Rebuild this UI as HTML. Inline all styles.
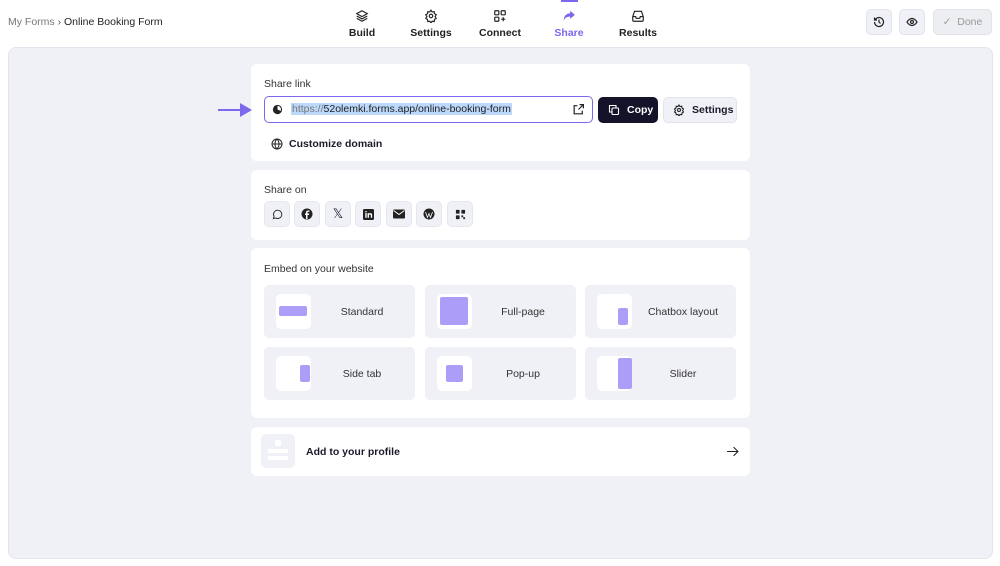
<!DOCTYPE html>
<html><head><meta charset="utf-8"><style>
*{box-sizing:border-box;margin:0;padding:0}
body{width:1000px;height:566px;background:#fff;font-family:"Liberation Sans",sans-serif;color:#1a1a2a;position:relative;overflow:hidden;font-size:10.5px}
.abs{position:absolute}
.nav{position:absolute;top:9px;width:60px;text-align:center;font-size:10.5px;font-weight:bold;color:#222}
.nav svg{display:block;margin:0 auto 4px}
.panel{position:absolute;left:8px;top:47px;width:985px;height:512px;background:#f0f1f6;border:1px solid #e4e5ec;border-radius:8px}
.card{position:absolute;left:251px;width:499px;background:#fff;border-radius:6px}
.lbl{position:absolute;left:13px;font-size:10.5px;color:#333}
.sq{position:absolute;top:31px;width:26px;height:26px;background:#f0f1f6;border:1px solid #e6e7ee;border-radius:5px;display:flex;align-items:center;justify-content:center}
.tile{position:absolute;width:151px;height:53px;background:#f0f1f6;border-radius:5px}
.tile .ic{position:absolute;left:12px;top:9px;width:35px;height:35px;background:#fff;border-radius:5px}
.tile .ic i{position:absolute;background:#ac9ef8;border-radius:2px}
.tile span{position:absolute;left:45px;right:0;top:21px;text-align:center;font-size:10.5px;color:#333}
.rb{position:absolute;top:9px;width:26px;height:26px;background:#f0f1f6;border:1px solid #e3e4ea;border-radius:5px;display:flex;align-items:center;justify-content:center}
.btn{position:absolute;top:33px;height:26px;border-radius:5px;font-weight:bold;font-size:10.5px;display:flex;align-items:center;gap:7px;padding-left:10px}
</style></head><body>
<div class="abs" style="left:8px;top:16px;font-size:10.5px;color:#777">My Forms <span style="color:#555">›</span> <span style="color:#222">Online Booking Form</span></div>

<div class="nav" style="left:332px"><svg width="14" height="14" viewBox="0 0 24 24" fill="none" stroke="#222" stroke-width="2"><path d="M12 3 3 8l9 5 9-5z"/><path d="M3 12l9 5 9-5M3 16l9 5 9-5"/></svg>Build</div>
<div class="nav" style="left:401px"><svg width="14" height="14" viewBox="0 0 24 24" fill="none" stroke="#222" stroke-width="2"><circle cx="12" cy="12" r="3"/><path d="M12 2l2 3 3.5-.5.5 3.5 3 2-2 3 2 3-3 2-.5 3.5-3.5-.5-2 3-2-3-3.5.5-.5-3.5-3-2 2-3-2-3 3-2 .5-3.5 3.5.5z"/></svg>Settings</div>
<div class="nav" style="left:470px"><svg width="14" height="14" viewBox="0 0 24 24" fill="none" stroke="#222" stroke-width="2"><rect x="3" y="3" width="7" height="7" rx="1"/><rect x="14" y="3" width="7" height="7" rx="1"/><rect x="3" y="14" width="7" height="7" rx="1"/><path d="M17.5 14v7M14 17.5h7"/></svg>Connect</div>
<div class="abs" style="left:561px;top:0;width:17px;height:2px;background:#7b68ee"></div>
<div class="nav" style="left:539px;color:#7b68ee"><svg width="14" height="14" viewBox="0 0 24 24" fill="#7b68ee"><path d="M14 3l8 7-8 7v-4c-6 0-9 2-11 7 0-7 3-12 11-13z"/></svg>Share</div>
<div class="nav" style="left:608px"><svg width="14" height="14" viewBox="0 0 24 24" fill="none" stroke="#222" stroke-width="2"><path d="M3 13l3-9h12l3 9v6a2 2 0 0 1-2 2H5a2 2 0 0 1-2-2z"/><path d="M3 13h5l1 3h6l1-3h5"/></svg>Results</div>

<div class="rb" style="left:866px"><svg width="12" height="12" viewBox="0 0 24 24" fill="none" stroke="#222" stroke-width="2.4"><path d="M3 12a9 9 0 1 0 3-6.7L3 8M3 3v5h5M12 7v5l3 3"/></svg></div>
<div class="rb" style="left:899px"><svg width="12" height="12" viewBox="0 0 24 24" fill="none" stroke="#222" stroke-width="2.4"><path d="M2 12s4-7 10-7 10 7 10 7-4 7-10 7S2 12 2 12z"/><circle cx="12" cy="12" r="3"/></svg></div>
<div class="rb" style="left:933px;width:59px;color:#999;font-size:10.5px;background:#eceef2">✓&nbsp; Done</div>

<div class="panel"></div>

<div class="card" style="top:64px;height:97px">
 <div class="lbl" style="top:14px">Share link</div>
 <div class="abs" style="left:13px;top:32px;width:329px;height:27px;border:1.5px solid #7b68ee;border-radius:5px">
  <svg class="abs" style="left:7px;top:7px" width="11" height="11" viewBox="0 0 24 24"><circle cx="12" cy="12" r="10" fill="#222"/><path d="M12 12V4a8 8 0 0 1 7 11z" fill="#fff"/></svg>
  <span class="abs" style="left:26px;top:6px;background:#bcd8fb;font-size:10.5px;color:#222;padding:0 1px"><span style="color:#777">https://</span>52olemki.forms.app/online-booking-form</span>
  <svg class="abs" style="left:307px;top:6px" width="13" height="13" viewBox="0 0 24 24" fill="none" stroke="#222" stroke-width="2.2"><path d="M14 3h7v7M21 3l-9 9M19 14v6H4V5h6"/></svg>
 </div>
 <div class="btn" style="left:347px;width:60px;background:#14132a;color:#fff"><svg width="12" height="12" viewBox="0 0 24 24" fill="none" stroke="#fff" stroke-width="2.2"><rect x="8" y="8" width="13" height="13" rx="2"/><path d="M16 8V3H3v13h5"/></svg>Copy</div>
 <div class="btn" style="left:412px;width:74px;background:#f0f1f6;border:1px solid #e3e4ea;padding-left:9px"><svg width="12" height="12" viewBox="0 0 24 24" fill="none" stroke="#222" stroke-width="2.2"><circle cx="12" cy="12" r="3"/><path d="M12 2l2 3 3.5-.5.5 3.5 3 2-2 3 2 3-3 2-.5 3.5-3.5-.5-2 3-2-3-3.5.5-.5-3.5-3-2 2-3-2-3 3-2 .5-3.5 3.5.5z"/></svg>Settings</div>
 <svg class="abs" style="left:20px;top:74px" width="12" height="12" viewBox="0 0 24 24" fill="none" stroke="#222" stroke-width="2"><circle cx="12" cy="12" r="10"/><path d="M2 12h20M12 2c3 3 4 7 4 10s-1 7-4 10c-3-3-4-7-4-10s1-7 4-10"/></svg>
 <div class="abs" style="left:38px;top:74px;font-weight:bold;font-size:10.5px">Customize domain</div>
</div>
<svg class="abs" style="left:218px;top:103px" width="36" height="14" viewBox="0 0 36 14"><path d="M0 7h24" stroke="#7b68ee" stroke-width="2"/><path d="M22 0l12 7-12 7z" fill="#7b68ee"/></svg>

<div class="card" style="top:170px;height:70px">
 <div class="lbl" style="top:14px">Share on</div>
 <div class="sq" style="left:13px"><svg width="11" height="11" viewBox="0 0 24 24" fill="none" stroke="#222" stroke-width="2"><path d="M3 21l1.5-5A9 9 0 1 1 8 19.5z"/></svg></div>
 <div class="sq" style="left:43px"><svg width="12" height="12" viewBox="0 0 24 24"><circle cx="12" cy="12" r="11" fill="#222"/><path d="M13 22v-8h3l.5-3H13V9c0-1 .5-1.5 1.5-1.5H17V5h-3c-2.5 0-4 1.5-4 4v2H8v3h2v8z" fill="#fff"/></svg></div>
 <div class="sq" style="left:74px;font-size:13px">𝕏</div>
 <div class="sq" style="left:104px"><svg width="11" height="11" viewBox="0 0 24 24"><rect width="24" height="24" rx="3" fill="#222"/><path d="M5 9h3v10H5zM10 9h3v1.5c1-2 7-2.5 7 2.5v6h-3v-5c0-2.5-4-2.5-4 0v5h-3z" fill="#fff"/><circle cx="6.5" cy="6" r="1.7" fill="#fff"/></svg></div>
 <div class="sq" style="left:135px"><svg width="12" height="10" viewBox="0 0 24 18"><rect width="24" height="18" rx="2" fill="#222"/><path d="M1 2l11 8 11-8" stroke="#fff" stroke-width="2" fill="none"/></svg></div>
 <div class="sq" style="left:165px"><svg width="12" height="12" viewBox="0 0 24 24"><circle cx="12" cy="12" r="11" fill="#222"/><path d="M5 8l4 11 3-8 3 8 4-11" stroke="#fff" stroke-width="1.6" fill="none"/></svg></div>
 <div class="sq" style="left:196px"><svg width="11" height="11" viewBox="0 0 24 24" fill="#222"><rect x="2" y="2" width="8" height="8" rx="1"/><rect x="14" y="2" width="8" height="8" rx="1"/><rect x="2" y="14" width="8" height="8" rx="1"/><rect x="14" y="14" width="4" height="4"/><rect x="18" y="18" width="4" height="4"/></svg></div>
</div>

<div class="card" style="top:248px;height:170px">
 <div class="lbl" style="top:15px">Embed on your website</div>
 <div class="tile" style="left:13px;top:37px"><div class="ic"><i style="left:3px;top:12px;width:28px;height:10px"></i></div><span>Standard</span></div>
 <div class="tile" style="left:174px;top:37px"><div class="ic"><i style="left:3px;top:3px;width:28px;height:28px"></i></div><span>Full-page</span></div>
 <div class="tile" style="left:334px;top:37px"><div class="ic"><i style="left:21px;top:14px;width:10px;height:17px"></i></div><span>Chatbox layout</span></div>
 <div class="tile" style="left:13px;top:99px"><div class="ic"><i style="left:24px;top:9px;width:10px;height:17px"></i></div><span>Side tab</span></div>
 <div class="tile" style="left:174px;top:99px"><div class="ic"><i style="left:9px;top:9px;width:17px;height:17px"></i></div><span>Pop-up</span></div>
 <div class="tile" style="left:334px;top:99px"><div class="ic"><i style="left:21px;top:2px;width:14px;height:31px"></i></div><span>Slider</span></div>
</div>

<div class="card" style="top:427px;height:49px">
 <div class="abs" style="left:10px;top:7px;width:34px;height:34px;background:#f0f1f6;border-radius:5px">
  <i class="abs" style="left:14px;top:6px;width:6px;height:6px;background:#fff;border-radius:2px"></i>
  <i class="abs" style="left:7px;top:15px;width:20px;height:4px;background:#fff"></i>
  <i class="abs" style="left:7px;top:22px;width:20px;height:4px;background:#fff"></i>
 </div>
 <div class="abs" style="left:55px;top:19px;font-weight:bold;font-size:10.5px">Add to your profile</div>
 <svg class="abs" style="left:475px;top:18px" width="13" height="13" viewBox="0 0 24 24" fill="none" stroke="#222" stroke-width="2"><path d="M2 12h20M14 4l8 8-8 8"/></svg>
</div>
</body></html>
